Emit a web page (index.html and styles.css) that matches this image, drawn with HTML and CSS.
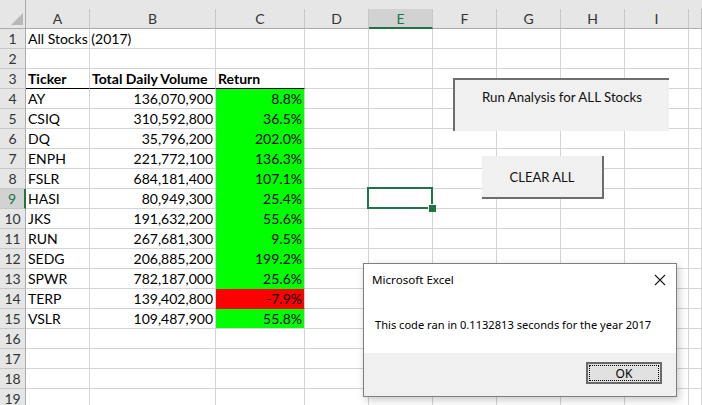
FILE: index.html
```html
<!DOCTYPE html>
<html>
<head>
<meta charset="utf-8">
<link rel="stylesheet" href="styles.css">
</head>
<body>
<div class="sheet">
  <div class="colhead">
    <div class="hc corner"><span class="tri"></span></div>
    <div class="hc">A</div><div class="hc">B</div><div class="hc">C</div><div class="hc">D</div>
    <div class="hc hsel">E</div><div class="hc">F</div><div class="hc">G</div><div class="hc">H</div><div class="hc">I</div><div class="hc"></div>
  </div>

  <div class="row"><div class="rh">1</div><div class="c">All Stocks (2017)</div><div class="c"></div><div class="c"></div><div class="c"></div><div class="c"></div><div class="c"></div><div class="c"></div><div class="c"></div><div class="c"></div><div class="c"></div></div>
  <div class="row"><div class="rh">2</div><div class="c"></div><div class="c"></div><div class="c"></div><div class="c"></div><div class="c"></div><div class="c"></div><div class="c"></div><div class="c"></div><div class="c"></div><div class="c"></div></div>
  <div class="row"><div class="rh">3</div><div class="c b th">Ticker</div><div class="c b th">Total Daily Volume</div><div class="c b th">Return</div><div class="c"></div><div class="c"></div><div class="c"></div><div class="c"></div><div class="c"></div><div class="c"></div><div class="c"></div></div>
  <div class="row"><div class="rh">4</div><div class="c">AY</div><div class="c r">136,070,900</div><div class="c r g">8.8%</div><div class="c"></div><div class="c"></div><div class="c"></div><div class="c"></div><div class="c"></div><div class="c"></div><div class="c"></div></div>
  <div class="row"><div class="rh">5</div><div class="c">CSIQ</div><div class="c r">310,592,800</div><div class="c r g">36.5%</div><div class="c"></div><div class="c"></div><div class="c"></div><div class="c"></div><div class="c"></div><div class="c"></div><div class="c"></div></div>
  <div class="row"><div class="rh">6</div><div class="c">DQ</div><div class="c r">35,796,200</div><div class="c r g">202.0%</div><div class="c"></div><div class="c"></div><div class="c"></div><div class="c"></div><div class="c"></div><div class="c"></div><div class="c"></div></div>
  <div class="row"><div class="rh">7</div><div class="c">ENPH</div><div class="c r">221,772,100</div><div class="c r g">136.3%</div><div class="c"></div><div class="c"></div><div class="c"></div><div class="c"></div><div class="c"></div><div class="c"></div><div class="c"></div></div>
  <div class="row"><div class="rh">8</div><div class="c">FSLR</div><div class="c r">684,181,400</div><div class="c r g">107.1%</div><div class="c"></div><div class="c"></div><div class="c"></div><div class="c"></div><div class="c"></div><div class="c"></div><div class="c"></div></div>
  <div class="row"><div class="rh rsel">9</div><div class="c">HASI</div><div class="c r">80,949,300</div><div class="c r g">25.4%</div><div class="c"></div><div class="c sel"></div><div class="c"></div><div class="c"></div><div class="c"></div><div class="c"></div><div class="c"></div></div>
  <div class="row"><div class="rh">10</div><div class="c">JKS</div><div class="c r">191,632,200</div><div class="c r g">55.6%</div><div class="c"></div><div class="c"></div><div class="c"></div><div class="c"></div><div class="c"></div><div class="c"></div><div class="c"></div></div>
  <div class="row"><div class="rh">11</div><div class="c">RUN</div><div class="c r">267,681,300</div><div class="c r g">9.5%</div><div class="c"></div><div class="c"></div><div class="c"></div><div class="c"></div><div class="c"></div><div class="c"></div><div class="c"></div></div>
  <div class="row"><div class="rh">12</div><div class="c">SEDG</div><div class="c r">206,885,200</div><div class="c r g">199.2%</div><div class="c"></div><div class="c"></div><div class="c"></div><div class="c"></div><div class="c"></div><div class="c"></div><div class="c"></div></div>
  <div class="row"><div class="rh">13</div><div class="c">SPWR</div><div class="c r">782,187,000</div><div class="c r g">25.6%</div><div class="c"></div><div class="c"></div><div class="c"></div><div class="c"></div><div class="c"></div><div class="c"></div><div class="c"></div></div>
  <div class="row"><div class="rh">14</div><div class="c">TERP</div><div class="c r">139,402,800</div><div class="c r red">-7.9%</div><div class="c"></div><div class="c"></div><div class="c"></div><div class="c"></div><div class="c"></div><div class="c"></div><div class="c"></div></div>
  <div class="row"><div class="rh">15</div><div class="c">VSLR</div><div class="c r">109,487,900</div><div class="c r g last">55.8%</div><div class="c"></div><div class="c"></div><div class="c"></div><div class="c"></div><div class="c"></div><div class="c"></div><div class="c"></div></div>
  <div class="row"><div class="rh">16</div><div class="c"></div><div class="c"></div><div class="c"></div><div class="c"></div><div class="c"></div><div class="c"></div><div class="c"></div><div class="c"></div><div class="c"></div><div class="c"></div></div>
  <div class="row"><div class="rh">17</div><div class="c"></div><div class="c"></div><div class="c"></div><div class="c"></div><div class="c"></div><div class="c"></div><div class="c"></div><div class="c"></div><div class="c"></div><div class="c"></div></div>
  <div class="row"><div class="rh">18</div><div class="c"></div><div class="c"></div><div class="c"></div><div class="c"></div><div class="c"></div><div class="c"></div><div class="c"></div><div class="c"></div><div class="c"></div><div class="c"></div></div>
  <div class="row"><div class="rh">19</div><div class="c"></div><div class="c"></div><div class="c"></div><div class="c"></div><div class="c"></div><div class="c"></div><div class="c"></div><div class="c"></div><div class="c"></div><div class="c"></div></div>

  <div class="btn btn-run">Run Analysis for ALL Stocks</div>
  <div class="btn btn-clear">CLEAR ALL</div>

  <div class="dialog">
    <div class="dlg-title">
      <span>Microsoft Excel</span>
      <svg class="dlg-x" width="12" height="12" viewBox="0 0 12 12"><path d="M1 1L11 11M11 1L1 11" stroke="#1a1a1a" stroke-width="1.1" fill="none"/></svg>
    </div>
    <div class="dlg-msg">This code ran in 0.1132813 seconds for the year 2017</div>
    <div class="dlg-foot">
      <div class="ok"><span class="ok-in">OK</span></div>
    </div>
  </div>
</div>
</body>
</html>
```

FILE: styles.css
```css
* { box-sizing: border-box; }
html, body { margin: 0; padding: 0; background: #fff; }
body { width: 702px; height: 405px; overflow: hidden; }

.sheet {
  position: relative;
  width: 702px;
  height: 405px;
  overflow: hidden;
  font-family: Lato, "Liberation Sans", sans-serif;
  font-size: 14px;
  color: #000;
}

.colhead, .row {
  display: grid;
  grid-template-columns: 26px 64px 126px 89px 64px 64px 64px 64px 64px 64px 1fr;
}

.colhead {
  padding-top: 9px;
  height: 29px;
  background: #e6e6e6;
}

.hc {
  height: 20px;
  border-right: 1px solid #c6c6c6;
  border-bottom: 1px solid #ababab;
  display: flex;
  align-items: center;
  justify-content: center;
  color: #333;
  font-size: 14px;
}

.corner {
  margin-top: -9px;
  height: 29px;
  border-right: 1px solid #ababab;
  display: flex;
  align-items: flex-end;
  justify-content: flex-end;
  padding: 0 2px 3px 0;
}

.tri {
  width: 12px;
  height: 12px;
  background: #b8b8b8;
  clip-path: polygon(100% 0, 100% 100%, 0 100%);
}

.hsel {
  background: #d2d2d2;
  color: #217346;
  border-bottom: 2px solid #217346;
}

.row { height: 20px; }

.rh {
  background: #e6e6e6;
  border-right: 1px solid #ababab;
  border-bottom: 1px solid #c6c6c6;
  display: flex;
  align-items: center;
  justify-content: center;
  color: #333;
  font-size: 14px;
}

.rsel {
  background: #d2d2d2;
  color: #217346;
  border-right: 2px solid #217346;
}

.c {
  border-right: 1px solid #d4d4d4;
  border-bottom: 1px solid #d4d4d4;
  padding: 0 2px;
  display: flex;
  align-items: center;
  white-space: nowrap;
  overflow: visible;
  line-height: 19px;
}

.b { font-weight: bold; }
.th { border-bottom-color: #000; }
.r { justify-content: flex-end; }
.g { background: #00ff00; border-bottom-color: #00ff00; }
.g.last { border-bottom-color: #d4d4d4; }
.red { background: #ff0000; border-bottom-color: #ff0000; }

.sel { position: relative; }
.sel::after {
  content: "";
  position: absolute;
  left: -2px; top: -2px; right: -1px; bottom: -1px;
  border: 2px solid #217346;
}
.sel::before {
  content: "";
  position: absolute;
  right: -4px; bottom: -4px;
  width: 7px; height: 7px;
  background: #217346;
  border-left: 1px solid #fff;
  border-top: 1px solid #fff;
  z-index: 2;
}

.btn {
  position: absolute;
  background: #f0f0f0;
  color: #111;
  display: flex;
  justify-content: center;
}

.btn-run {
  left: 453px; top: 78px;
  width: 216px; height: 53px;
  border-top: 2px solid #6d6d6d;
  border-left: 2px solid #6d6d6d;
  padding-top: 9px;
  font-size: 13.3px;
}

.btn-clear {
  left: 482px; top: 156px;
  width: 122px; height: 43px;
  border-right: 2px solid #6d6d6d;
  border-bottom: 2px solid #6d6d6d;
  align-items: center;
  font-size: 13px;
}

.dialog {
  position: absolute;
  left: 363px; top: 263px;
  width: 314px; height: 134px;
  background: #fff;
  border: 1px solid #7f7f7f;
  box-shadow: 2px 3px 8px rgba(0,0,0,0.22);
  font-family: "Noto Sans", "Open Sans", sans-serif;
  font-size: 11.4px;
  color: #000;
  display: flex;
  flex-direction: column;
}

.dlg-title {
  height: 31px;
  padding: 0 10px 0 8px;
  display: flex;
  align-items: center;
  justify-content: space-between;
  font-size: 11.6px;
}

.dlg-msg {
  height: 58px;
  padding-left: 11px;
  padding-top: 0;
  display: flex;
  align-items: center;
  font-size: 11.1px;
}

.dlg-foot {
  flex: 1;
  background: #f0f0f0;
  display: flex;
  justify-content: flex-end;
  align-items: flex-start;
  padding: 9px 14px 0 0;
}

.ok {
  width: 76px; height: 22px;
  border: 2px solid #6a6a6a;
  background: #e1e1e1;
  padding: 1px;
}

.ok-in {
  display: flex;
  width: 100%; height: 100%;
  border: 1px dotted #000;
  align-items: center;
  justify-content: center;
  font-size: 12px;
}
```
